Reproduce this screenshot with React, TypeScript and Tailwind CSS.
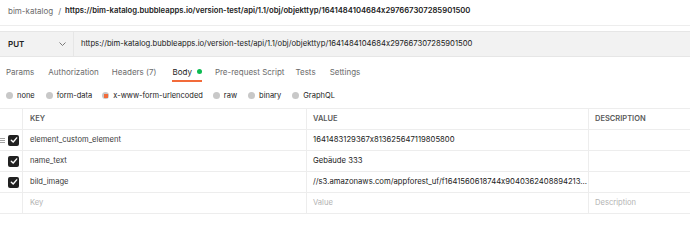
import React from "react";

function Check() {
  return (
    <div className="w-[11px] h-[11px] rounded-[2px] bg-[#212121] flex items-center justify-center">
      <svg width="8" height="8" viewBox="0 0 8 8" fill="none">
        <path d="M1.3 4.2 L3.2 6 L6.7 1.9" stroke="white" strokeWidth="1.4" strokeLinecap="round" strokeLinejoin="round" />
      </svg>
    </div>
  );
}

function Radio({ label, active, className }: { label: string; active?: boolean; className?: string }) {
  return (
    <div className={"flex items-center gap-[4px] " + (className ?? "")}>
      {active ? (
        <div className="w-[7px] h-[7px] rounded-full bg-[#c8c8c8] flex items-center justify-center">
          <div className="w-[4px] h-[4px] bg-[#f26b3a]" />
        </div>
      ) : (
        <div className="w-[7px] h-[7px] rounded-full bg-[#c8c8c8]" />
      )}
      <span className="text-[#212121]">{label}</span>
    </div>
  );
}

const rows = [
  { k: "element_custom_element", v: "1641483129367x813625647119805800", handle: true },
  { k: "name_text", v: "Gebäude 333" },
  { k: "bild_image", v: "//s3.amazonaws.com/appforest_uf/f1641560618744x9040362408894213..." },
];

export default function App() {
  return (
    <div className="w-[690px] h-[242px] bg-white text-[8px] leading-[10px] text-[#212121] overflow-hidden font-[Inter,'Noto_Sans',sans-serif] [font-variant-ligatures:no-contextual]">
      <div className="h-[26px] flex items-center pb-[4px] pl-[8px] border-b border-[#ededed]">
        <span className="text-[#6b6b6b]">bim-katalog</span>
        <span className="text-[#6b6b6b] ml-[5px] mr-[4px]">/</span>
        <span className="font-semibold text-[#212121] text-[7.7px]">
          https://bim-katalog.bubbleapps.io/version-test/api/1.1/obj/objekttyp/1641484104684x297667307285901500
        </span>
      </div>
      <div className="mt-[5px] h-[26px] flex bg-[#f2f2f2] border-y border-[#e6e6e6]">
        <div className="w-[74px] flex items-center justify-between pl-[8px] pr-[7px] border-r border-[#e6e6e6]">
          <span className="font-semibold text-[#212121]">PUT</span>
          <svg width="7" height="4" viewBox="0 0 7 4" fill="none">
            <path d="M0.5 0.5 L3.5 3.5 L6.5 0.5" stroke="#6b6b6b" strokeWidth="0.9" />
          </svg>
        </div>
        <div className="flex items-center pl-[7px] text-[#212121] text-[7.7px]">
          https://bim-katalog.bubbleapps.io/version-test/api/1.1/obj/objekttyp/1641484104684x297667307285901500
        </div>
      </div>
      <div className="mt-[3px] h-[23px] flex pl-[6px] text-[#6b6b6b]">
        <div className="flex items-center">Params</div>
        <div className="flex items-center ml-[14px]">Authorization</div>
        <div className="flex items-center ml-[13px]">Headers (7)</div>
        <div className="flex items-center relative ml-[16px]">
          <span className="text-[#212121]">Body</span>
          <span className="ml-[5px] w-[5px] h-[5px] rounded-full bg-[#0cbb52]" />
          <div className="absolute left-0 right-0 bottom-[1px] h-[2px] bg-[#f26b3a]" />
        </div>
        <div className="flex items-center ml-[13px]">Pre-request Script</div>
        <div className="flex items-center ml-[11px]">Tests</div>
        <div className="flex items-center ml-[14px]">Settings</div>
      </div>
      <div className="h-[25px] flex items-center pl-[6px] text-[7.5px]">
        <Radio label="none" />
        <Radio label="form-data" className="ml-[11px]" />
        <Radio label="x-www-form-urlencoded" active className="ml-[10px]" />
        <Radio label="raw" className="ml-[10px]" />
        <Radio label="binary" className="ml-[11px]" />
        <Radio label="GraphQL" className="ml-[11px]" />
      </div>
      <div className="border-t border-[#ededed]">
        <div className="grid grid-cols-[23px_284px_282px_101px] h-[21px] border-b border-[#ededed] text-[7.5px] font-semibold text-[#5a5a5a]">
          <div className="border-r border-[#ededed]" />
          <div className="border-r border-[#ededed] flex items-center pl-[7px]">KEY</div>
          <div className="border-r border-[#ededed] flex items-center pl-[6px]">VALUE</div>
          <div className="flex items-center pl-[6px]">DESCRIPTION</div>
        </div>
        {rows.map((r) => (
          <div key={r.k} className="grid grid-cols-[23px_284px_282px_101px] h-[21px] border-b border-[#ededed]">
            <div className="border-r border-[#ededed] flex items-center justify-end pr-[3px] relative">
              {r.handle && (
                <svg className="absolute left-[0px] top-[7px]" width="6" height="7" viewBox="0 0 6 7" fill="none">
                  <path d="M0 1.5 H5 M0 3.5 H5 M0 5.5 H5" stroke="#8a8a8a" strokeWidth="0.8" />
                </svg>
              )}
              <Check />
            </div>
            <div className="border-r border-[#ededed] flex items-center pl-[7px] text-[#3a3a3a] text-[7.6px]">{r.k}</div>
            <div className="border-r border-[#ededed] flex items-center pl-[6px] text-[#212121] text-[7.7px] whitespace-nowrap overflow-hidden">{r.v}</div>
            <div />
          </div>
        ))}
        <div className="grid grid-cols-[23px_284px_282px_101px] h-[21px] border-b border-[#ededed] text-[#b3b3b3] text-[7.6px]">
          <div className="border-r border-[#ededed]" />
          <div className="border-r border-[#ededed] flex items-center pl-[7px]">Key</div>
          <div className="border-r border-[#ededed] flex items-center pl-[6px]">Value</div>
          <div className="flex items-center pl-[6px]">Description</div>
        </div>
      </div>
    </div>
  );
}
